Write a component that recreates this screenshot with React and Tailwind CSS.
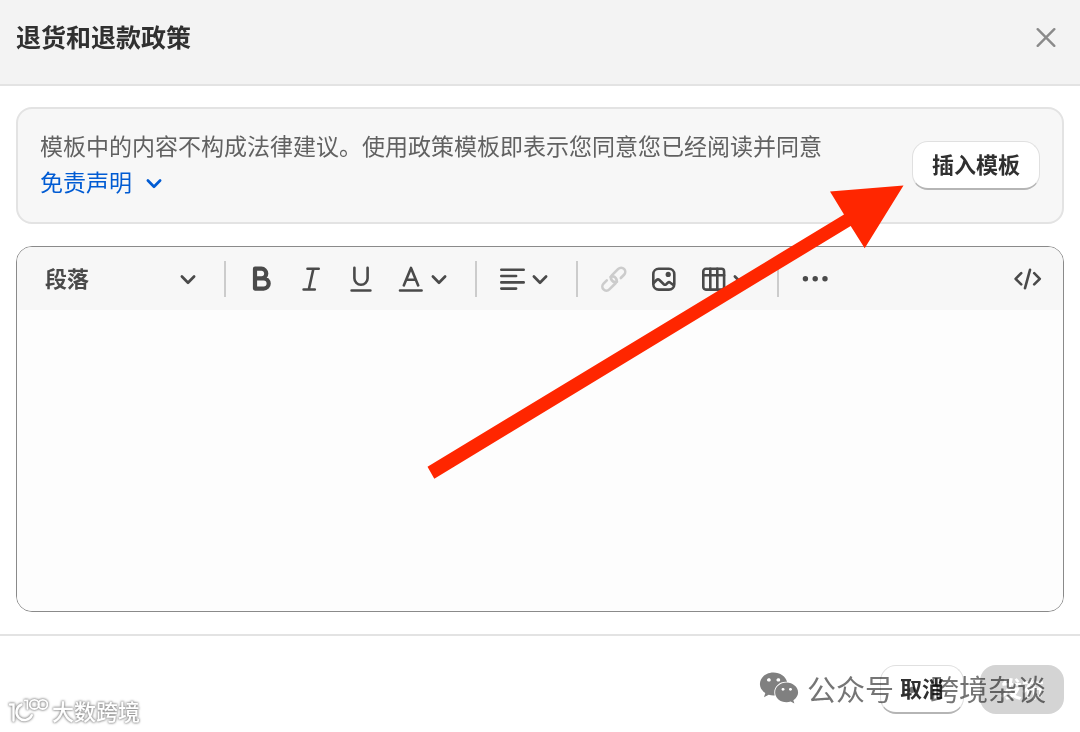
import React, { useState } from 'react';
import { FaWeixin } from 'react-icons/fa';

const Icon = ({ children, className = '' }) => (
    <svg
        viewBox="0 0 26 26"
        className={`w-[26px] h-[26px] shrink-0 overflow-visible ${className}`}
        fill="none"
        stroke="currentColor"
        strokeWidth="2.6"
        strokeLinecap="round"
        strokeLinejoin="round"
        aria-hidden="true"
    >
        {children}
    </svg>
);

const Chevron = ({ className = '' }) => (
    <svg viewBox="0 0 16 16" className={`w-4 h-4 shrink-0 overflow-visible ${className}`} fill="none" stroke="currentColor" strokeWidth="2.7" strokeLinecap="round" strokeLinejoin="round" aria-hidden="true">
        <path d="M1.9 5.5L8 11.7l6.1-6.2" />
    </svg>
);

const ToolButton = ({ label, menu, disabled, children }) => (
    <button
        type="button"
        aria-label={label}
        disabled={disabled}
        className={`h-11 flex items-center shrink-0 pl-3 gap-[7px] ${menu ? 'w-[74px]' : 'w-[50px]'} ${disabled ? 'text-[#cccccc]' : 'text-[#4a4a4a]'}`}
    >
        {children}
        {menu && <Chevron />}
    </button>
);

const Divider = () => <div className="w-0.5 h-9 shrink-0 ml-[15px] mr-2.5 bg-[#cccccc]" />;

const Toolbar = ({ block, onBlockChange }) => (
    <div role="toolbar" aria-label="格式" className="h-[63px] flex items-center bg-[#f7f7f7] text-[#4a4a4a]">
        <div className="relative w-[192px] shrink-0">
            <select
                aria-label="格式"
                value={block}
                onChange={e => onBlockChange(e.target.value)}
                className="appearance-none w-full h-11 pl-7 pb-[3px] bg-transparent text-[22px] font-bold focus:outline-none"
            >
                <option value="p">段落</option>
                <option value="h1">标题 1</option>
                <option value="h2">标题 2</option>
            </select>
            <Chevron className="absolute right-[13px] top-3.5 pointer-events-none" />
        </div>
        <Divider />
        <ToolButton label="粗体">
            <Icon><path strokeWidth="4.2" d="M7 2.7h6.4a4.8 4.8 0 0 1 0 9.7H7zM7 12.4h8.6a5.1 5.1 0 0 1 0 10.2H7z" /></Icon>
        </ToolButton>
        <ToolButton label="斜体">
            <Icon><path d="M9.5 2.8h11.2M5.6 23.5h11.2M15.4 2.8l-4.6 20.7" /></Icon>
        </ToolButton>
        <ToolButton label="下划线">
            <Icon><path d="M6.4 1.8v10.4a6.6 6.6 0 0 0 13.2 0V1.8M3.6 24.5h18.8" /></Icon>
        </ToolButton>
        <ToolButton label="颜色" menu>
            <Icon><path d="M5.8 19.4L13 1.9l7.2 17.5M8.4 13.8h9.2M2 24.5h21.6" /></Icon>
        </ToolButton>
        <Divider />
        <ToolButton label="对齐方式" menu>
            <Icon><path d="M2.3 3.8h22.4M2.3 10h14.8M2.3 16.4h22.4M2.3 22.6h14.8" /></Icon>
        </ToolButton>
        <Divider />
        <ToolButton label="插入链接" disabled>
            <Icon>
                <g transform="translate(13.8 13.2) rotate(-45)">
                    <path d="M5.8 4.1h4.6a4.1 4.1 0 0 0 0-8.2H1.6a4.1 4.1 0 0 0-1 8" />
                    <path d="M-5.8-4.1h-4.6a4.1 4.1 0 0 0 0 8.2h8.8a4.1 4.1 0 0 0 1-8" />
                </g>
            </Icon>
        </ToolButton>
        <ToolButton label="插入图片">
            <Icon>
                <rect x="3.3" y="2.8" width="21" height="20.8" rx="5.4" />
                <circle cx="18.2" cy="8.4" r="2.6" fill="currentColor" stroke="none" />
                <path d="M3.6 17.2l3-3.2a2 2 0 0 1 2.8 0l4.4 4.2a1.8 1.8 0 0 0 2.4 0l1.6-1.5a1.9 1.9 0 0 1 2.5 0l3.4 2.4" />
            </Icon>
        </ToolButton>
        <ToolButton label="插入表格" menu>
            <Icon>
                <rect x="3.3" y="2.8" width="20.8" height="20.8" rx="2.6" />
                <path d="M3.3 9.2h20.8M10.3 2.8v20.8M17.3 2.8v20.8" />
            </Icon>
        </ToolButton>
        <Divider />
        <ToolButton label="更多">
            <Icon>
                <g fill="currentColor" stroke="none">
                    <circle cx="4.4" cy="12.8" r="2.7" />
                    <circle cx="14.2" cy="12.8" r="2.7" />
                    <circle cx="24" cy="12.8" r="2.7" />
                </g>
            </Icon>
        </ToolButton>
        <div className="ml-auto mr-[11px]">
            <ToolButton label="显示 HTML">
                <Icon><path d="M7.2 7.2l-5.6 5.6 5.6 5.6M20.2 7.2l5.6 5.6-5.6 5.6M16 3.8l-5 18.4" /></Icon>
            </ToolButton>
        </div>
    </div>
);

const secondaryButton =
    'shrink-0 px-[19px] pt-[7px] pb-[11px] text-[22px] leading-7 font-bold text-[#303030] bg-white rounded-2xl border border-b-2 border-[#e0e0e0] border-b-[#b5b5b5]';

const App = () => {
    const [block, setBlock] = useState('p');
    const [content, setContent] = useState('');

    return (
        <div className="relative min-h-screen flex flex-col bg-white overflow-hidden font-['Noto_Sans_CJK_SC',sans-serif]">
            <header className="flex items-center justify-between pt-[18px] pb-[26px] pl-4 pr-6 bg-[#f3f3f3] border-b-2 border-[#e3e3e3]">
                <h1 className="pb-1 text-[25px] leading-9 font-bold text-[#303030]">退货和退款政策</h1>
                <button type="button" aria-label="关闭" className="text-[#8a8a8a]">
                    <svg viewBox="0 0 20 20" className="w-5 h-5" fill="none" stroke="currentColor" strokeWidth="2.4" strokeLinecap="round" aria-hidden="true">
                        <path d="M1.7 1.2l16.6 16.6M18.3 1.2L1.7 17.8" />
                    </svg>
                </button>
            </header>

            <main className="flex-1 flex flex-col gap-[22px] px-4 pt-[21px] pb-[22px]">
                <section className="flex items-center justify-between gap-6 px-[22px] pt-[18px] pb-[19px] bg-[#f7f7f7] border-2 border-[#e3e3e3] rounded-2xl">
                    <p className="pb-1 text-[23px] leading-9 text-[#616161]">
                        模板中的内容不构成法律建议。使用政策模板即表示您同意您已经阅读并同意
                        <a href="#disclaimer" className="inline-flex items-center gap-3.5 align-top text-[#005bd3]">
                            免责声明
                            <Chevron className="mt-1" />
                        </a>
                    </p>
                    <button type="button" className={secondaryButton}>插入模板</button>
                </section>

                <section className="flex-1 flex flex-col border border-[#8a8a8a] rounded-2xl overflow-hidden">
                    <Toolbar block={block} onBlockChange={setBlock} />
                    <textarea
                        aria-label="退货和退款政策"
                        value={content}
                        onChange={e => setContent(e.target.value)}
                        className="flex-1 w-full min-h-60 p-7 text-[22px] bg-[#fdfdfd] resize-none focus:outline-none"
                    />
                </section>
            </main>

            <footer className="relative flex justify-end gap-4 pt-[29px] pb-[18px] px-4 border-t-2 border-[#e3e3e3]">
                <button type="button" className={secondaryButton}>取消</button>
                <button type="button" className="px-5 pt-2 pb-[13px] text-[22px] leading-7 font-bold text-white bg-[#d4d4d4] rounded-2xl">发布</button>

                {/* Account watermark */}
                <div className="absolute right-[34px] bottom-[22px] flex items-center text-[29px] leading-[44px] text-[#757575] mix-blend-multiply pointer-events-none">
                    <FaWeixin className="w-10 h-9 mr-2 text-[#808080]" />
                    <span>公众号</span>
                    <span className="w-9 text-center">·</span>
                    <span>跨境杂谈</span>
                </div>

                {/* Site watermark */}
                <div className="absolute left-2 bottom-1.5 flex items-center gap-1 text-[22px] leading-8 font-medium text-white pointer-events-none [filter:drop-shadow(0_0_1px_#888)_drop-shadow(0_0_1px_#aaa)]">
                    <svg viewBox="0 0 40 28" className="w-10 h-7" fill="none" stroke="currentColor" strokeLinecap="round" aria-hidden="true">
                        <path strokeWidth="2.4" d="M2 8.5h3.5v16M13.4 8.6a8 8 0 1 0 10.4 10.6" />
                        <path strokeWidth="1.8" d="M16.8 4.4h2.6v8.4" />
                        <circle strokeWidth="1.8" cx="26.4" cy="8.4" r="4.6" />
                        <circle strokeWidth="1.8" cx="34.8" cy="8.4" r="4.6" />
                    </svg>
                    <span>大数跨境</span>
                </div>
            </footer>

            {/* Callout arrow pointing at the insert button */}
            <svg viewBox="427 185 477 294" className="absolute left-[427px] top-[185px] w-[477px] h-[294px] pointer-events-none" aria-hidden="true">
                <path fill="#ff2600" d="M427.5 466.7L844 214.5 830 191.5 903.5 185.4 864.7 248.3 850.7 226 434.3 478.7z" />
            </svg>
        </div>
    );
};

export default App;
